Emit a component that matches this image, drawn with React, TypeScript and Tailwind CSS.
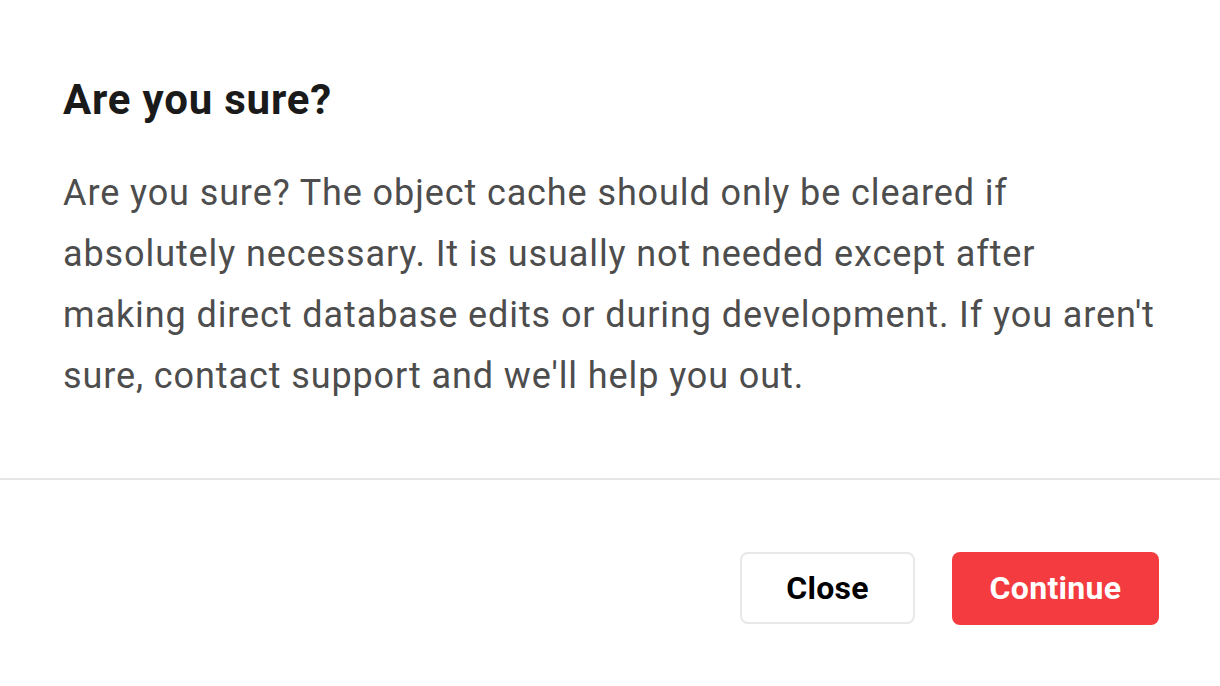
const App = () => {
  return (
    <div className="w-[1220px] h-[686px] bg-white flex flex-col font-['Roboto',sans-serif]">
      <div className="pl-[63px] pr-[56px] pt-[76px] h-[478px]">
        <h2 className="text-[42px] leading-[48px] font-bold tracking-[0.8px] text-[#1a1a1a]">Are you sure?</h2>
        <p className="mt-[39px] text-[36px] leading-[61px] tracking-[0.9px] text-[#4d4d4d]">
          Are you sure? The object cache should only be cleared if absolutely necessary. It is usually not
          needed except after making direct database edits or during development. If you aren't sure,
          contact support and we'll help you out.
        </p>
      </div>
      <div className="h-[2px] bg-[#e6e6e6]" />
      <div className="flex-1 flex items-center justify-end gap-[37px] pr-[61px] pt-[10px]">
        <button className="w-[175px] h-[72px] rounded-[8px] border-2 border-[#e8e8e8] bg-white text-[32px] font-bold tracking-[0.3px] text-black">
          Close
        </button>
        <button className="w-[207px] h-[73px] rounded-[8px] bg-[#f43b3f] text-[32px] font-bold tracking-[0.3px] text-white">
          Continue
        </button>
      </div>
    </div>
  );
};

export default App;
